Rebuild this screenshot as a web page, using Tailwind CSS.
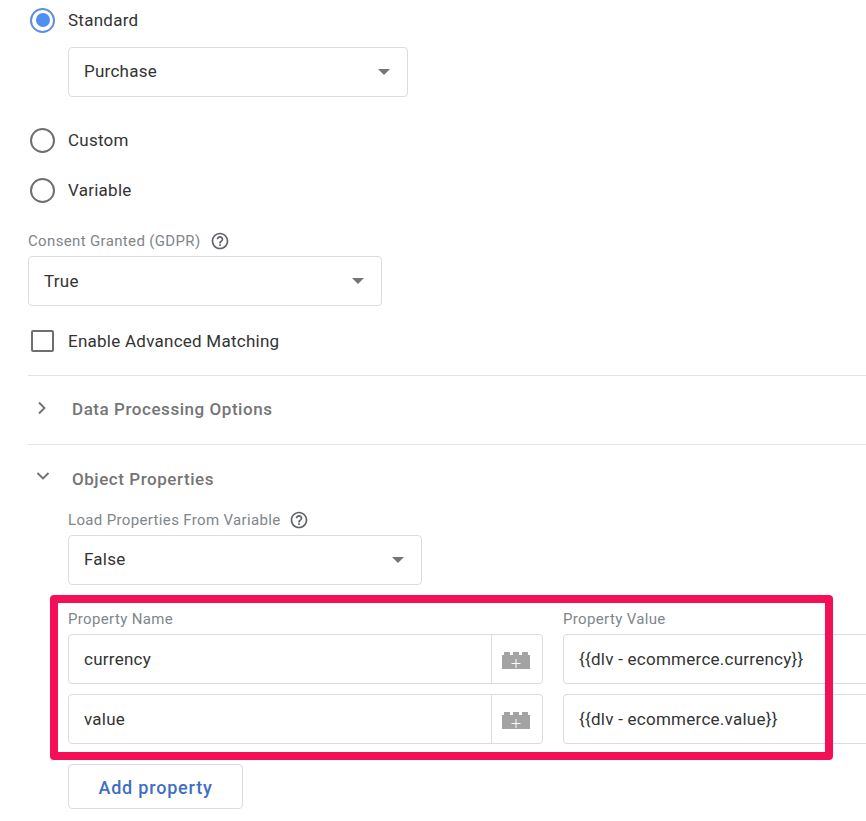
<!DOCTYPE html>
<html lang="en">

<head>
    <meta charset="UTF-8">
    <title>Object Properties</title>
    <script src="https://cdn.jsdelivr.net/npm/@tailwindcss/browser@4"></script>
</head>

<body class="bg-white">
    <div class="relative w-[866px] h-[821px] overflow-hidden pl-[28px] font-['Roboto',sans-serif] text-[17px] tracking-[0.25px] text-[#333333]">

        <div class="h-[40px] flex items-center gap-[13px] pl-[2px]">
            <div class="w-[25px] h-[25px] rounded-full border-2 border-[#5f8fdc] flex items-center justify-center">
                <div class="w-[14px] h-[14px] rounded-full bg-[#4f8ff0]"></div>
            </div>
            <span class="pt-[2px]">Standard</span>
        </div>
        <div class="ml-[40px] mt-[7px] w-[340px] h-[50px] border border-[#dadce0] rounded-[4px] flex items-center justify-between pl-[15px] pr-[17px]">
            <span>Purchase</span>
            <div class="w-0 h-0 border-x-[6px] border-x-transparent border-t-[6px] border-t-[#757575]"></div>
        </div>

        <div class="mt-[23px] h-[40px] flex items-center gap-[13px] pl-[2px]">
            <div class="w-[25px] h-[25px] rounded-full border-2 border-[#6f6f6f]"></div>
            <span class="pt-[2px]">Custom</span>
        </div>
        <div class="mt-[10px] h-[40px] flex items-center gap-[13px] pl-[2px]">
            <div class="w-[25px] h-[25px] rounded-full border-2 border-[#6f6f6f]"></div>
            <span class="pt-[2px]">Variable</span>
        </div>

        <div class="mt-[23px] h-[16px] flex items-center gap-[9px] text-[15px] tracking-[0.35px] text-[#80868b]">
            <span>Consent Granted (GDPR)</span>
            <svg class="w-[20px] h-[20px]" viewBox="0 0 24 24" fill="#5f6368"><path d="M11 18h2v-2h-2v2zm1-16C6.48 2 2 6.48 2 12s4.48 10 10 10 10-4.48 10-10S17.52 2 12 2zm0 18c-4.41 0-8-3.59-8-8s3.59-8 8-8 8 3.59 8 8-3.59 8-8 8zm0-14c-2.21 0-4 1.79-4 4h2c0-1.1.9-2 2-2s2 .9 2 2c0 2-3 1.75-3 5h2c0-2.25 3-2.5 3-5 0-2.21-1.79-4-4-4z"/></svg>
        </div>
        <div class="mt-[7px] w-[354px] h-[50px] border border-[#dadce0] rounded-[4px] flex items-center justify-between pl-[15px] pr-[17px]">
            <span class="pt-[2px]">True</span>
            <div class="w-0 h-0 border-x-[6px] border-x-transparent border-t-[6px] border-t-[#757575]"></div>
        </div>

        <div class="mt-[20px] h-[30px] flex items-center gap-[14px] pl-[3px]">
            <div class="w-[23px] h-[22px] rounded-[2px] border-2 border-[#6f6f6f]"></div>
            <span class="pt-[2px]">Enable Advanced Matching</span>
        </div>

        <div class="mt-[19px] border-t border-[#e3e3e3] h-[69px] flex items-center">
            <svg class="w-[10px] h-[14px] ml-[9px] -mt-[4px]" viewBox="0 0 10 14" fill="none" stroke="#6f6f6f" stroke-width="1.8"><path d="M2 1.5 7.5 7 2 12.5"/></svg>
            <span class="ml-[25px] font-medium text-[#757575] tracking-[0.55px]">Data Processing Options</span>
        </div>
        <div class="border-t border-[#e3e3e3] h-[69px] flex items-center">
            <svg class="w-[14px] h-[10px] ml-[8px] -mt-[6px]" viewBox="0 0 14 10" fill="none" stroke="#6f6f6f" stroke-width="1.8"><path d="M1.5 2 7 7.5 12.5 2"/></svg>
            <span class="ml-[22px] pt-[2px] font-medium text-[#757575] tracking-[0.55px]">Object Properties</span>
        </div>

        <div class="ml-[40px] mt-[-1px]">
            <div class="mt-[-1px] h-[16px] flex items-center gap-[8px] text-[15px] tracking-[0.35px] text-[#80868b]">
                <span>Load Properties From Variable</span>
                <svg class="w-[20px] h-[20px]" viewBox="0 0 24 24" fill="#5f6368"><path d="M11 18h2v-2h-2v2zm1-16C6.48 2 2 6.48 2 12s4.48 10 10 10 10-4.48 10-10S17.52 2 12 2zm0 18c-4.41 0-8-3.59-8-8s3.59-8 8-8 8 3.59 8 8-3.59 8-8 8zm0-14c-2.21 0-4 1.79-4 4h2c0-1.1.9-2 2-2s2 .9 2 2c0 2-3 1.75-3 5h2c0-2.25 3-2.5 3-5 0-2.21-1.79-4-4-4z"/></svg>
            </div>
            <div class="mt-[7px] w-[354px] h-[50px] border border-[#dadce0] rounded-[4px] flex items-center justify-between pl-[15px] pr-[17px]">
                <span>False</span>
                <div class="w-0 h-0 border-x-[6px] border-x-transparent border-t-[6px] border-t-[#757575]"></div>
            </div>

            <div class="mt-[26px] flex gap-[20px] w-[900px]">
                <div class="w-[475px]">
                    <div class="h-[16px] flex items-center text-[15px] tracking-[0.35px] text-[#80868b]">Property Name</div>
                    <div class="mt-[7px] h-[50px] border border-[#dadce0] rounded-[4px] flex items-center">
                        <span class="flex-1 pl-[15px] pt-[2px]">currency</span>
                        <div class="w-[51px] h-full border-l border-[#dadce0] flex items-center justify-center pr-[2px] pt-[3px]">
                            <svg class="w-[28px] h-[17px]" viewBox="0 0 28 17"><path fill="#a3a3a3" d="M0 3h2V0h6v3h3V0h6v3h3V0h6v3h2v14H0z"/><path fill="#fff" d="M13.5 7h1v4h4v1h-4v4h-1v-4h-4v-1h4z"/></svg>
                        </div>
                    </div>
                    <div class="mt-[10px] h-[50px] border border-[#dadce0] rounded-[4px] flex items-center">
                        <span class="flex-1 pl-[15px] pt-[2px]">value</span>
                        <div class="w-[51px] h-full border-l border-[#dadce0] flex items-center justify-center pr-[2px] pt-[3px]">
                            <svg class="w-[28px] h-[17px]" viewBox="0 0 28 17"><path fill="#a3a3a3" d="M0 3h2V0h6v3h3V0h6v3h3V0h6v3h2v14H0z"/><path fill="#fff" d="M13.5 7h1v4h4v1h-4v4h-1v-4h-4v-1h4z"/></svg>
                        </div>
                    </div>
                </div>
                <div class="flex-1">
                    <div class="h-[16px] flex items-center text-[15px] tracking-[0.35px] text-[#80868b]">Property Value</div>
                    <div class="mt-[7px] h-[50px] border border-[#dadce0] rounded-[4px] flex items-center pl-[15px] pt-[2px]">{{dlv - ecommerce.currency}}</div>
                    <div class="mt-[10px] h-[50px] border border-[#dadce0] rounded-[4px] flex items-center pl-[15px] pt-[2px]">{{dlv - ecommerce.value}}</div>
                </div>
            </div>

            <button class="mt-[20px] w-[175px] h-[45px] border border-[#dadce0] rounded-[4px] pt-[1px] font-medium text-[18px] text-[#3f6fc4] tracking-[0.8px]">Add property</button>
        </div>

        <!-- highlight box drawn over the property rows -->
        <div class="absolute left-[50px] top-[595px] w-[783px] h-[165px] border-[8px] border-[#f50f57] rounded-[4px]"></div>
    </div>
</body>

</html>
